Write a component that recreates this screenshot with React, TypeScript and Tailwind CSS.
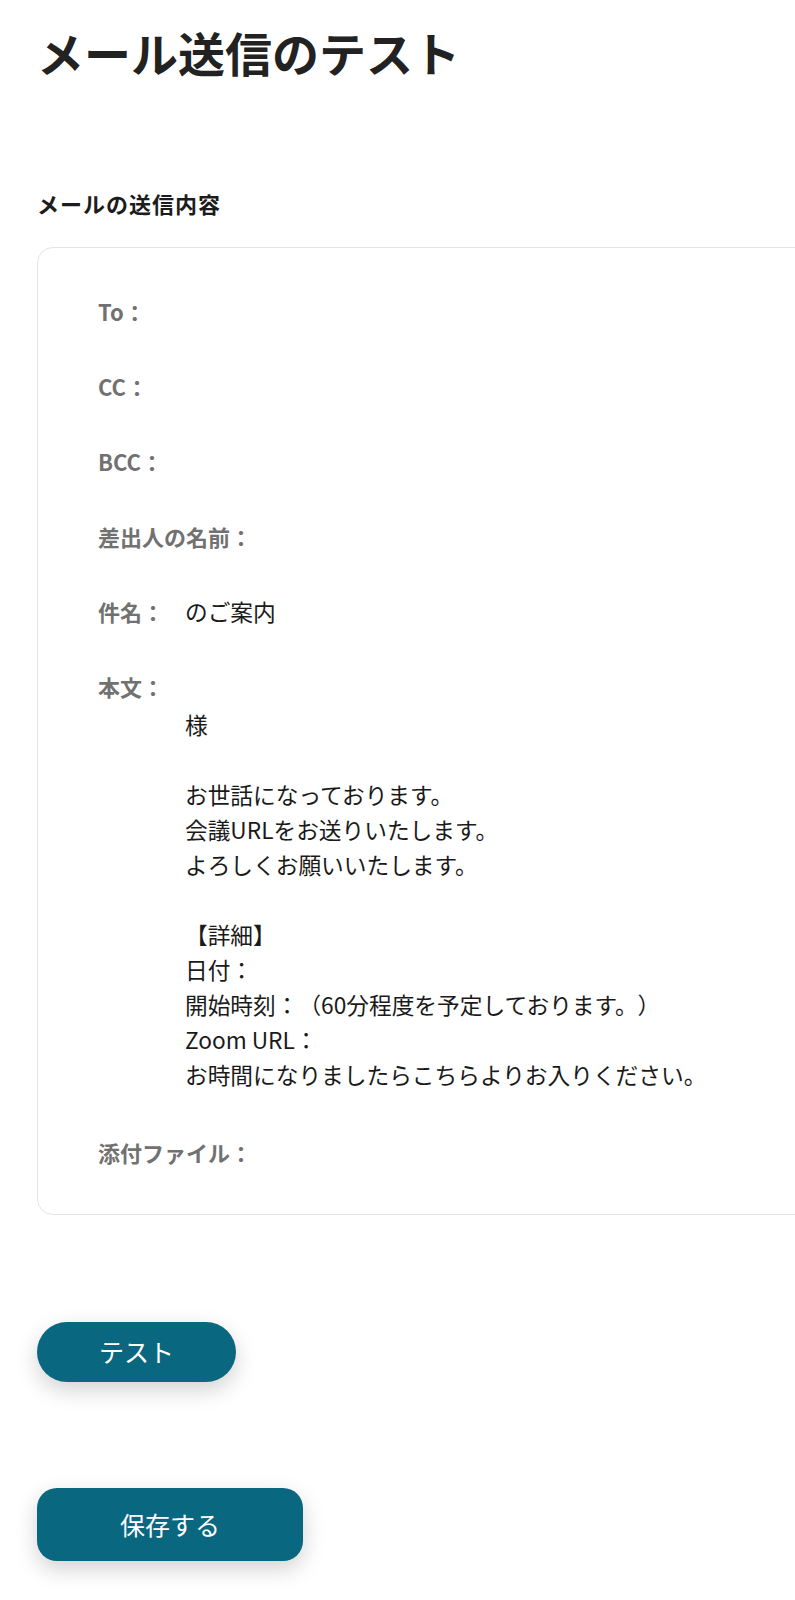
const FONT = '"Noto Sans CJK JP", "Noto Sans", sans-serif';

const BODY_LINES = [
  '様',
  '',
  'お世話になっております。',
  '会議URLをお送りいたします。',
  'よろしくお願いいたします。',
  '',
  '【詳細】',
  '日付：',
  '開始時刻：（60分程度を予定しております。）',
  'Zoom URL：',
  'お時間になりましたらこちらよりお入りください。',
];

function Label({ children }: { children: React.ReactNode }) {
  return <span className="text-[22px] font-bold text-[#717171]">{children}</span>;
}

export default function App() {
  return (
    <div
      className="w-full overflow-x-hidden bg-white [text-spacing-trim:space-all]"
      style={{ fontFamily: FONT }}
    >
      <div className="min-h-[1600px] pl-[37px]">
        <h1 className="pt-[24px] text-[47px] leading-[55px] font-bold text-[#222222]">
          メール送信のテスト
        </h1>

        <h2 className="mt-[109px] text-[22px] leading-[30px] font-bold tracking-[1px] text-[#1c1c1c]">
          メールの送信内容
        </h2>

        {/* 送信内容カード */}
        <div className="mt-[29px] w-[820px] rounded-[16px] border border-[#e4e4e4] pt-[46px] pb-[44px] pl-[60px] text-[22.7px] leading-[35px] text-[#1a1a1a]">
          <div className="flex flex-col gap-[40px]">
            <div><Label>To：</Label></div>
            <div><Label>CC：</Label></div>
            <div><Label>BCC：</Label></div>
            <div><Label>差出人の名前：</Label></div>
            <div className="flex">
              <span className="w-[87px] shrink-0"><Label>件名：</Label></span>
              <span>のご案内</span>
            </div>
            <div>
              <Label>本文：</Label>
              <div className="mt-[3px] mb-[3px] pl-[87px]">
                {BODY_LINES.map((line, i) => (
                  <div key={i} className="h-[35px]">{line}</div>
                ))}
              </div>
            </div>
            <div><Label>添付ファイル：</Label></div>
          </div>
        </div>

        <button className="mt-[107px] block h-[60px] w-[199px] rounded-full bg-[#09677f] text-[25px] text-white shadow-[0_8px_22px_rgba(0,0,0,0.18)]">
          テスト
        </button>

        <button className="mt-[106px] block h-[73px] w-[266px] rounded-[20px] bg-[#09677f] text-[25px] text-white shadow-[0_8px_22px_rgba(0,0,0,0.18)]">
          保存する
        </button>
      </div>
    </div>
  );
}
